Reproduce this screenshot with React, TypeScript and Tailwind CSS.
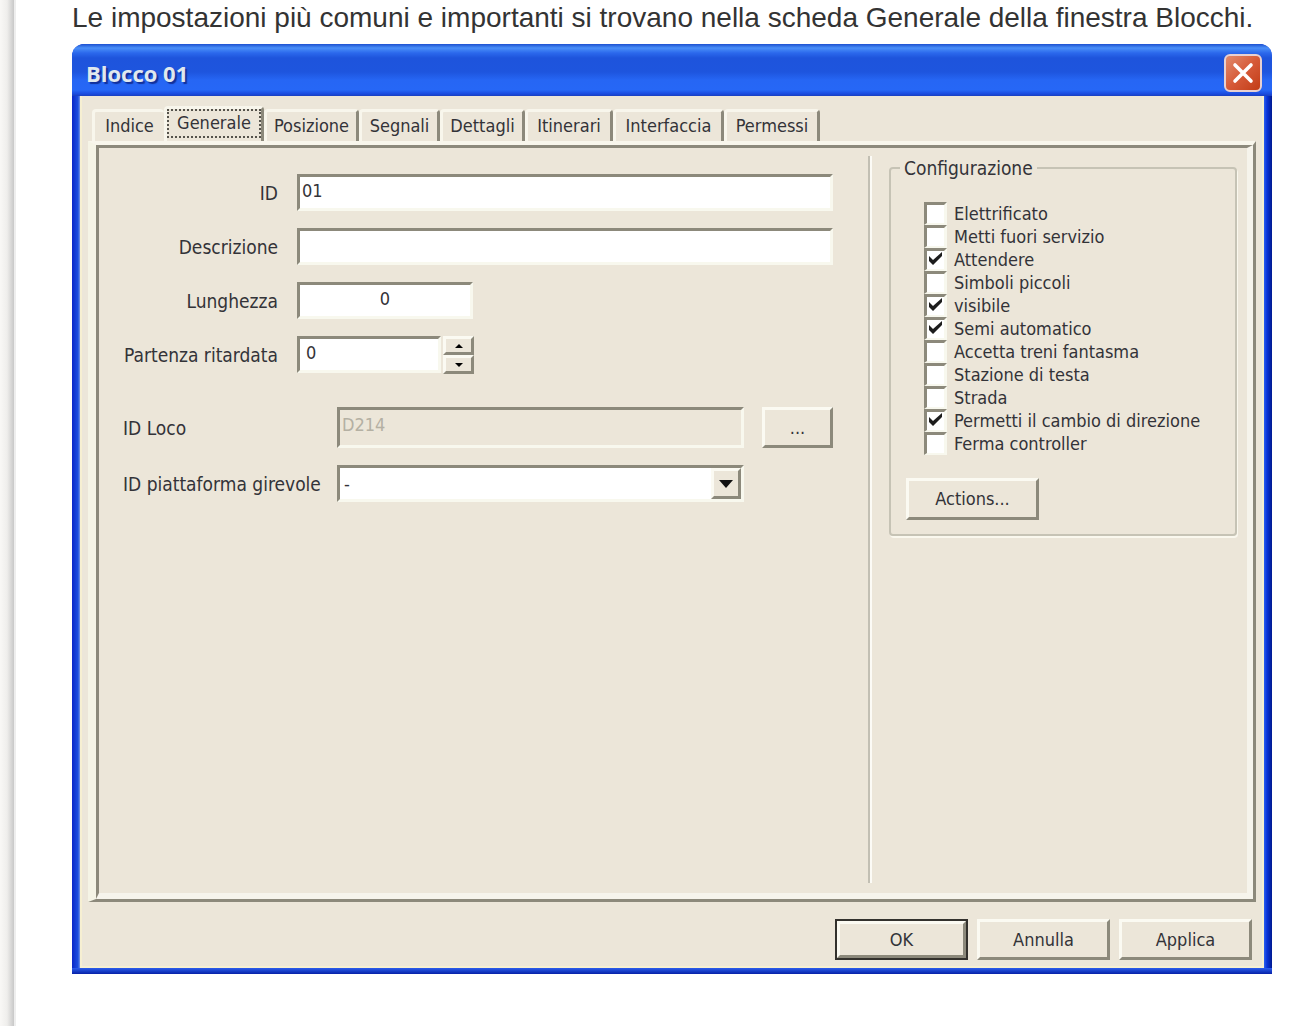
import { useState } from "react";
import type { ReactNode } from "react";
import clsx from "clsx";

const tabs = [
  { label: "Indice", width: "w-[72px]" },
  { label: "Generale", width: "w-[100px]" },
  { label: "Posizione", width: "w-[95px]" },
  { label: "Segnali", width: "w-[81px]" },
  { label: "Dettagli", width: "w-[85px]" },
  { label: "Itinerari", width: "w-[88px]" },
  { label: "Interfaccia", width: "w-[111px]" },
  { label: "Permessi", width: "w-[96px]" },
];

const options = [
  { label: "Elettrificato", checked: false },
  { label: "Metti fuori servizio", checked: false },
  { label: "Attendere", checked: true },
  { label: "Simboli piccoli", checked: false },
  { label: "visibile", checked: true },
  { label: "Semi automatico", checked: true },
  { label: "Accetta treni fantasma", checked: false },
  { label: "Stazione di testa", checked: false },
  { label: "Strada", checked: false },
  { label: "Permetti il cambio di direzione", checked: true },
  { label: "Ferma controller", checked: false },
];

const sunken = "border-3 border-t-[#8c897b] border-l-[#8c897b] border-r-[#f8f8ee] border-b-[#f8f8ee] outline-none";
const raised = "border-3 border-t-[#fbfaf2] border-l-[#fbfaf2] border-r-[#8c897b] border-b-[#8c897b] bg-[#ece6d9]";

function PushButton({ children, className }: { children: ReactNode; className?: string }) {
  return (
    <button type="button" className={clsx("flex items-center justify-center", raised, className)}>
      {children}
    </button>
  );
}

function Option({ label, checked }: { label: string; checked: boolean }) {
  return (
    <label className="flex h-[23px] items-center gap-[7px]">
      <span className="grid shrink-0">
        <input
          type="checkbox"
          defaultChecked={checked}
          className="peer col-start-1 row-start-1 h-[23px] w-[23px] appearance-none border-t-3 border-r-3 border-b-2 border-l-3 border-t-[#8c897b] border-r-[#f8f8ee] border-b-[#f8f8ee] border-l-[#8c897b] bg-white"
        />
        <svg viewBox="0 0 23 23" className="pointer-events-none invisible col-start-1 row-start-1 h-[23px] w-[23px] peer-checked:visible">
          <path d="M5 8 L9 12 L18 4 V8 L9 17 L5 13 Z" fill="#1c1c1c" />
        </svg>
      </span>
      <span className="whitespace-nowrap">{label}</span>
    </label>
  );
}

function TitleBar() {
  return (
    <div className="flex h-[52px] items-center justify-between bg-[linear-gradient(#1c50d0_0px,#4a8ff8_4px,#2b68ec_9px,#1e54dc_14px,#1e55de_28px,#2666f4_36px,#2667f6_46px,#1a4ade_50px,#1a3fbe_52px)] pt-1.5 pr-2.5 pl-3.5">
      <h2 className="font-['Open_Sans',sans-serif] text-[22px] leading-7 font-bold text-[#e0e8ee] [text-shadow:2px_2px_1px_#12309a]">
        Blocco 01
      </h2>
      <button
        type="button"
        aria-label="Chiudi"
        className="flex h-[38px] w-[38px] items-center justify-center rounded-md border-2 border-[#e8d0d0] bg-linear-to-br from-[#e08a6c] via-[#d65a38] to-[#c23c14]"
      >
        <svg viewBox="0 0 24 24" className="h-6 w-6" stroke="#fff" strokeWidth="3.6" strokeLinecap="round">
          <path d="M4 4 L20 20 M20 4 L4 20" />
        </svg>
      </button>
    </div>
  );
}

function GeneralForm() {
  return (
    <div className="flex flex-1 flex-col pt-[26px] pr-[35px] pl-6">
      <div className="grid grid-cols-[155px_1fr] items-center gap-x-[19px] gap-y-[17px]">
        <label htmlFor="id" className="text-right text-[19px]">ID</label>
        <input id="id" defaultValue="01" className={clsx("h-[37px] w-full bg-white px-0.5 pb-1", sunken)} />
        <label htmlFor="descrizione" className="text-right text-[19px]">Descrizione</label>
        <input id="descrizione" className={clsx("h-[37px] w-full bg-white px-0.5 pb-1", sunken)} />
        <label htmlFor="lunghezza" className="text-right text-[19px]">Lunghezza</label>
        <input id="lunghezza" defaultValue="0" className={clsx("h-[37px] w-[176px] bg-white pb-1 text-center", sunken)} />
        <label htmlFor="ritardo" className="text-right text-[19px] whitespace-nowrap">Partenza ritardata</label>
        <div className="flex gap-0.5">
          <input id="ritardo" defaultValue="0" className={clsx("h-[37px] w-[144px] bg-white px-1.5 pb-1", sunken)} />
          <div className="flex flex-col">
            <PushButton className="h-[19px] w-[31px]">
              <svg viewBox="0 0 8 4" className="h-1 w-2"><path d="M4 0 L8 4 H0 Z" /></svg>
            </PushButton>
            <PushButton className="h-[19px] w-[31px]">
              <svg viewBox="0 0 8 4" className="h-1 w-2"><path d="M0 0 H8 L4 4 Z" /></svg>
            </PushButton>
          </div>
        </div>
      </div>

      <div className="mt-[33px] grid grid-cols-[196px_1fr_71px] items-center gap-x-[18px] gap-y-[17px]">
        <label htmlFor="loco" className="text-[19px]">ID Loco</label>
        <input
          id="loco"
          defaultValue="D214"
          disabled
          className={clsx("h-[41px] w-full bg-[#ece6d9] px-0.5 pb-1.5 text-[#b4b0a3]", sunken)}
        />
        <PushButton className="h-[41px]">...</PushButton>
        <label htmlFor="piattaforma" className="text-[19px] whitespace-nowrap">ID piattaforma girevole</label>
        <div className="relative">
          <select id="piattaforma" className={clsx("block h-[37px] w-full appearance-none bg-white px-1", sunken)}>
            <option>-</option>
          </select>
          <span className={clsx("pointer-events-none absolute top-[3px] right-[3px] flex h-[31px] w-[30px] items-center justify-center", raised)}>
            <svg viewBox="0 0 14 8" className="h-2 w-3.5"><path d="M0 0 H14 L7 8 Z" fill="#111" /></svg>
          </span>
        </div>
      </div>
    </div>
  );
}

function Configuration() {
  return (
    <fieldset className="mt-2 h-[380px] w-[348px] shrink-0 rounded-sm border-2 border-[#c6c3b5] pl-[15px] shadow-[1px_2px_0_#faf8ee]">
      <legend className="-ml-1.5 px-1 text-[19px] leading-6">Configurazione</legend>
      <div className="mt-[22px] ml-[18px]">
        {options.map((option) => (
          <Option key={option.label} {...option} />
        ))}
      </div>
      <PushButton className="mt-[23px] h-[42px] w-[133px]">Actions...</PushButton>
    </fieldset>
  );
}

export default function App() {
  const [activeTab, setActiveTab] = useState("Generale");

  return (
    <div className="flex min-h-screen bg-white">
      <div className="w-4 shrink-0 border-r-2 border-[#eeeeee] bg-linear-to-r from-[#f9f8f6] via-[#efeeec] to-[#c8c8c8]" />
      <main className="flex-1 pr-10 pl-14">
        <p className="h-11 pt-0.5 font-['Liberation_Sans',Arial,sans-serif] text-[28px] leading-8 whitespace-nowrap text-[#333333]">
          Le impostazioni più comuni e importanti si trovano nella scheda Generale della finestra Blocchi.
        </p>

        <section className="overflow-hidden rounded-t-xl bg-[#1440dc] font-['DejaVu_Sans_Condensed','DejaVu_Sans',sans-serif] text-[18px] leading-6 text-[#333338]">
          <TitleBar />
          <div className="bg-[linear-gradient(to_right,#0a28c8_0px,#1c4ee0_6px,#7896e4_8px,transparent_8px,transparent_calc(100%-8px),#2c60ee_calc(100%-8px),#0a34d8_calc(100%-5px),#001a90_100%)] px-2">
            <div className="border-x-2 border-b-2 border-[#f6efd2] bg-[#ece6d9] px-1.5 pt-2.5 pb-1.5">
              <div role="tablist" className="flex items-end pl-1">
                {tabs.map((tab) => (
                  <button
                    key={tab.label}
                    type="button"
                    role="tab"
                    aria-selected={tab.label === activeTab}
                    onClick={() => setActiveTab(tab.label)}
                    className={clsx(
                      "flex shrink-0 justify-center rounded-t-sm border-t-3 border-l-3 border-[#f8f6ec] leading-6",
                      tab.width,
                      tab.label === activeTab ? "h-[35px] border-r-3 border-r-[#8c897b]" : "h-8 pt-0.5",
                      tab.label !== activeTab && tab.label !== "Indice" && "border-r-3 border-r-[#8c897b]",
                    )}
                  >
                    {tab.label === activeTab ? (
                      <span className="h-[29px] w-full border-2 border-dotted border-[#55534c] leading-6">{tab.label}</span>
                    ) : (
                      tab.label
                    )}
                  </button>
                ))}
              </div>

              <div className="border-t-4 border-r-3 border-b-3 border-l-8 border-t-[#f8f6ec] border-r-[#8c897b] border-b-[#8c897b] border-l-[#f5f4e6]">
                <div className="flex h-[754px] border-t-3 border-r-6 border-b-6 border-l-3 border-t-[#8c897b] border-r-[#f6f4ec] border-b-[#f6f4ec] border-l-[#8c897b]">
                  <GeneralForm />
                  <div className="mt-2 mr-[17px] mb-2.5 w-1 border-r-2 border-l-2 border-l-[#c2bfb3] border-r-[#fcfbf6]" />
                  <div className="pr-2.5">
                    <Configuration />
                  </div>
                </div>
              </div>

              <div className="mt-[17px] flex justify-end gap-[9px] pr-1">
                <button type="button" className="h-[41px] w-[133px] border-2 border-[#33312d]">
                  <span className={clsx("flex h-full items-center justify-center", raised)}>OK</span>
                </button>
                <PushButton className="h-[41px] w-[133px]">Annulla</PushButton>
                <PushButton className="h-[41px] w-[133px]">Applica</PushButton>
              </div>
            </div>
          </div>
          <div className="h-1.5 bg-linear-to-b from-[#2c5cec] to-[#0820a8]" />
        </section>
      </main>
    </div>
  );
}
